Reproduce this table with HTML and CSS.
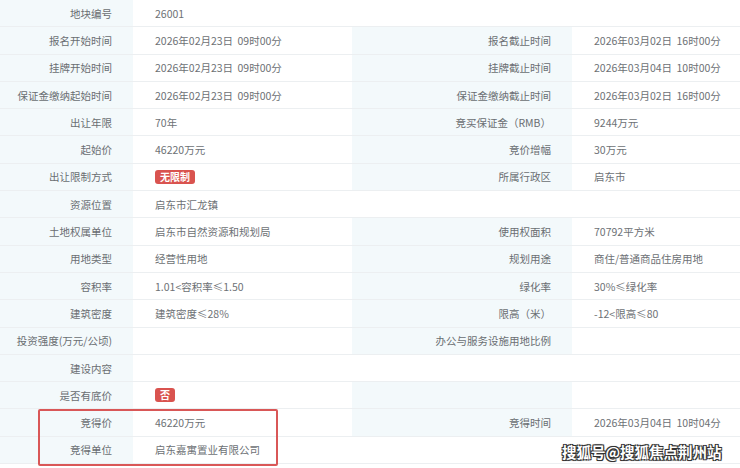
FILE: index.html
```html
<!DOCTYPE html>
<html lang="zh">
<head>
<meta charset="utf-8">
<link rel="stylesheet" href="styles.css">
</head>
<body>
<div class="sheet">
  <div class="grid">
    <div class="lab">地块编号</div><div class="val span3">26001</div>

    <div class="lab">报名开始时间</div><div class="val">2026年02月23日 09时00分</div>
    <div class="lab">报名截止时间</div><div class="val">2026年03月02日 16时00分</div>

    <div class="lab">挂牌开始时间</div><div class="val">2026年02月23日 09时00分</div>
    <div class="lab">挂牌截止时间</div><div class="val">2026年03月04日 10时00分</div>

    <div class="lab">保证金缴纳起始时间</div><div class="val">2026年02月23日 09时00分</div>
    <div class="lab">保证金缴纳截止时间</div><div class="val">2026年03月02日 16时00分</div>

    <div class="lab">出让年限</div><div class="val">70年</div>
    <div class="lab">竞买保证金（RMB）</div><div class="val">9244万元</div>

    <div class="lab">起始价</div><div class="val">46220万元</div>
    <div class="lab">竞价增幅</div><div class="val">30万元</div>

    <div class="lab">出让限制方式</div><div class="val"><span class="tag">无限制</span></div>
    <div class="lab">所属行政区</div><div class="val">启东市</div>

    <div class="lab">资源位置</div><div class="val span3">启东市汇龙镇</div>

    <div class="lab">土地权属单位</div><div class="val">启东市自然资源和规划局</div>
    <div class="lab">使用权面积</div><div class="val">70792平方米</div>

    <div class="lab">用地类型</div><div class="val">经营性用地</div>
    <div class="lab">规划用途</div><div class="val">商住/普通商品住房用地</div>

    <div class="lab">容积率</div><div class="val">1.01&lt;容积率≤1.50</div>
    <div class="lab">绿化率</div><div class="val">30%≤绿化率</div>

    <div class="lab">建筑密度</div><div class="val">建筑密度≤28%</div>
    <div class="lab">限高（米）</div><div class="val">-12&lt;限高≤80</div>

    <div class="lab">投资强度(万元/公顷)</div><div class="val"></div>
    <div class="lab">办公与服务设施用地比例</div><div class="val"></div>

    <div class="lab">建设内容</div><div class="val span3"></div>

    <div class="lab">是否有底价</div><div class="val"><span class="tag">否</span></div>
    <div class="lab"></div><div class="val"></div>

    <div class="lab">竞得价</div><div class="val">46220万元</div>
    <div class="lab">竞得时间</div><div class="val">2026年03月04日 10时04分</div>

    <div class="lab">竞得单位</div><div class="val span3">启东嘉寓置业有限公司</div>
  </div>
  <div class="highlight"></div>
  <div class="watermark">搜狐号@搜狐焦点荆州站</div>
</div>
</body>
</html>
```

FILE: styles.css
```css
* { box-sizing: border-box; }
html, body { margin: 0; padding: 0; background: #ffffff; }
body {
  width: 740px;
  height: 468px;
  overflow: hidden;
  font-family: "Noto Sans CJK SC", "Noto Sans", sans-serif;
  font-size: 10.5px;
  color: #6d7175;
}
.sheet {
  position: relative;
  width: 740px;
  height: 468px;
}
.grid {
  display: grid;
  grid-template-columns: 133px 219px 220px 168px;
  grid-auto-rows: 27.3px;
}
.lab, .val {
  display: flex;
  align-items: center;
  border-bottom: 1px solid #eceff1;
  white-space: nowrap;
}
.lab {
  justify-content: flex-end;
  padding-right: 21px;
  background: #f3f9fb;
  color: #6a6e72;
}
.val {
  padding-left: 22px;
  background: #ffffff;
  word-spacing: 2px;
}
.span3 { grid-column: span 3; }
.tag {
  display: inline-block;
  background: #d9534f;
  color: #ffffff;
  font-weight: bold;
  font-size: 10px;
  line-height: 14px;
  padding: 0 5px;
  border-radius: 3px;
}
.highlight {
  position: absolute;
  left: 38px;
  top: 409px;
  width: 240px;
  height: 57px;
  border: 2px solid #d95757;
  border-radius: 2px;
}
.watermark {
  position: absolute;
  left: 562px;
  top: 441px;
  font-size: 14.5px;
  font-weight: bold;
  color: #ffffff;
  text-shadow: -1px -1px 0 #333, 1px -1px 0 #333, -1px 1px 0 #333, 1px 1px 0 #333, 0 0 2px #000;
}
```
